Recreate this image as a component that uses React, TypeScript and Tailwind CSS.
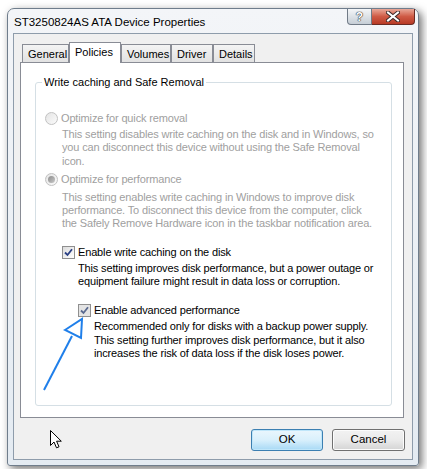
import React from "react";

const font = { fontFamily: '"Liberation Sans", Arial, sans-serif' };

const Radio: React.FC<{ checked?: boolean }> = ({ checked }) => (
  <span className="w-[13px] h-[13px] rounded-full border border-[#c2c2c2] bg-gradient-to-br from-[#e4e4e4] to-[#fbfbfb] flex items-center justify-center shrink-0">
    {checked && <span className="w-[7px] h-[7px] rounded-full bg-gradient-to-br from-[#8c8c8c] to-[#c8c8c8]" />}
  </span>
);

const Check: React.FC<{ dim?: boolean }> = ({ dim }) => (
  <span
    className={
      "w-[13px] h-[13px] border border-[#8f8f8f] flex items-center justify-center shrink-0 " +
      (dim ? "bg-[#e4e4e4]" : "bg-gradient-to-br from-[#dcdcdc] to-[#ffffff]")
    }
  >
    <svg width="9" height="9" viewBox="0 0 9 9">
      <path d="M1 4.5 L3.5 7 L8 1.2" fill="none" stroke={dim ? "#5a6a90" : "#2a3f84"} strokeWidth="1.8" />
    </svg>
  </span>
);

const Tab: React.FC<{ label: string; w: string; active?: boolean }> = ({ label, w, active }) =>
  active ? (
    <div className={`${w} h-[21px] bg-white border border-b-0 border-[#898c95] pl-[5px] pt-[2px] text-black`}>{label}</div>
  ) : (
    <div className={`${w} h-[18px] mb-[1px] bg-gradient-to-b from-[#f4f4f4] to-[#e2e2e2] border border-b-0 border-[#898c95] pl-[5px] pt-[2px] text-black`}>
      {label}
    </div>
  );

export default function App() {
  return (
    <div className="relative w-[427px] h-[469px] bg-white overflow-hidden text-[11px] text-black" style={font}>
      <div className="ml-[7px] mt-[8px] w-[412px] h-[458px] rounded-t-[7px] rounded-b-[3px] border border-[#6f7d8c] bg-gradient-to-b from-[#f3f5f8] to-[#e4ebf2] shadow-[3px_3px_9px_rgba(0,0,0,0.55)] flex flex-col">
        {/* title bar */}
        <div className="h-[24px] flex justify-between items-start">
          <div className="self-center pl-[6px] text-[11.5px] leading-[14px] pt-[1px]">ST3250824AS ATA Device Properties</div>
          <div className="flex mr-[3px]">
            <div className="w-[25px] h-[16px] rounded-bl-[4px] border border-t-0 border-[#707a86] bg-gradient-to-b from-[#f4f6f8] via-[#dde2e7] to-[#c6ced6] flex items-center justify-center">
              <span className="text-[12px] leading-[12px] font-bold text-white [text-shadow:0_0_1px_#333,0_0_1px_#333,0_0_1px_#333]">?</span>
            </div>
            <div className="w-[43px] h-[16px] rounded-br-[4px] border border-t-0 border-l-0 border-[#6a2a22] bg-gradient-to-b from-[#e8a899] via-[#cf5a45] to-[#b83a25] flex items-center justify-center">
              <svg width="14" height="11" viewBox="0 0 14 11">
                <path d="M2 1.5 L12 9.5 M12 1.5 L2 9.5" stroke="#3a2a2a" strokeWidth="4" strokeLinecap="square" />
                <path d="M2 1.5 L12 9.5 M12 1.5 L2 9.5" stroke="#ffffff" strokeWidth="2" strokeLinecap="square" />
              </svg>
            </div>
          </div>
        </div>

        {/* client area */}
        <div className="ml-[5px] w-[400px] h-[427px] border border-[#8e9cab] bg-[#f0f0f0] flex flex-col">
          <div className="relative z-10 flex items-end pl-[8px] pt-[8px] leading-[14px]">
            <Tab label="General" w="w-[47px]" />
            <Tab label="Policies" w="w-[52px]" active />
            <Tab label="Volumes" w="w-[50px]" />
            <Tab label="Driver" w="w-[42px]" />
            <Tab label="Details" w="w-[42px]" />
          </div>
          <div className="-mt-[1px] ml-[6px] w-[384px] h-[356px] border border-[#898c95] bg-white">
            <div className="relative ml-[14px] mt-[19px] w-[357px] h-[324px] border border-[#d5dfe5] rounded-[3px] tracking-[-0.15px]">
              <span className="absolute -top-[8px] left-[6px] bg-white px-[2px] leading-[14px] tracking-normal">Write caching and Safe Removal</span>

              <div className="pt-[29px] pl-[9px] flex items-center gap-[3px] leading-[13px] text-[#a0a0a0]">
                <Radio />
                <span>Optimize for quick removal</span>
              </div>
              <div className="mt-[3px] pl-[26px] leading-[13.3px] text-[#a0a0a0]">
                This setting disables write caching on the disk and in Windows, so
                <br />
                you can disconnect this device without using the Safe Removal
                <br />
                icon.
              </div>

              <div className="mt-[5px] pl-[9px] flex items-center gap-[3px] leading-[13px] text-[#a0a0a0]">
                <Radio checked />
                <span>Optimize for performance</span>
              </div>
              <div className="mt-[5px] pl-[26px] leading-[13.3px] text-[#a0a0a0]">
                This setting enables write caching in Windows to improve disk
                <br />
                performance. To disconnect this device from the computer, click
                <br />
                the Safely Remove Hardware icon in the taskbar notification area.
              </div>

              <div className="mt-[15px] pl-[26px] flex items-center gap-[3px] leading-[13px]">
                <Check />
                <span>Enable write caching on the disk</span>
              </div>
              <div className="mt-[3px] pl-[42px] leading-[13.3px]">
                This setting improves disk performance, but a power outage or
                <br />
                equipment failure might result in data loss or corruption.
              </div>

              <div className="mt-[16px] pl-[42px] flex items-center gap-[3px] leading-[13px]">
                <Check dim />
                <span>Enable advanced performance</span>
              </div>
              <div className="mt-[3px] pl-[58px] leading-[13.3px]">
                Recommended only for disks with a backup power supply.
                <br />
                This setting further improves disk performance, but it also
                <br />
                increases the risk of data loss if the disk loses power.
              </div>
            </div>
          </div>

          <div className="mt-[11px] flex justify-end gap-[9px] pr-[7px]">
            <button className="w-[72px] h-[22px] rounded-[3px] border border-[#3c7fb1] bg-gradient-to-b from-[#eaf6fd] via-[#d9f0fc] to-[#a7d9f5] shadow-[inset_0_0_0_1px_#bfe6fa] text-[11.5px]">
              OK
            </button>
            <button className="w-[73px] h-[22px] rounded-[3px] border border-[#707070] bg-gradient-to-b from-[#f2f2f2] via-[#ebebeb] to-[#d4d4d4] shadow-[inset_0_0_0_1px_#fcfcfc] text-[11.5px]">
              Cancel
            </button>
          </div>
        </div>
      </div>

      {/* annotation arrow */}
      <svg className="absolute left-0 top-0 pointer-events-none" width="427" height="469">
        <path d="M44 390 L72 336" stroke="#1f7fea" strokeWidth="2" fill="none" />
        <path d="M65 330 L82 319 L81 338 Z" stroke="#1f7fea" strokeWidth="2" fill="none" strokeLinejoin="miter" />
      </svg>

      {/* mouse cursor */}
      <svg className="absolute left-[50px] top-[430px]" width="13" height="19" viewBox="0 0 13 19">
        <path d="M0.5 0.5 L0.5 15.5 L4 12 L6.5 17.8 L9 16.8 L6.6 11.2 L11.3 11.2 Z" fill="#fff" stroke="#000" strokeWidth="1" />
      </svg>
    </div>
  );
}
